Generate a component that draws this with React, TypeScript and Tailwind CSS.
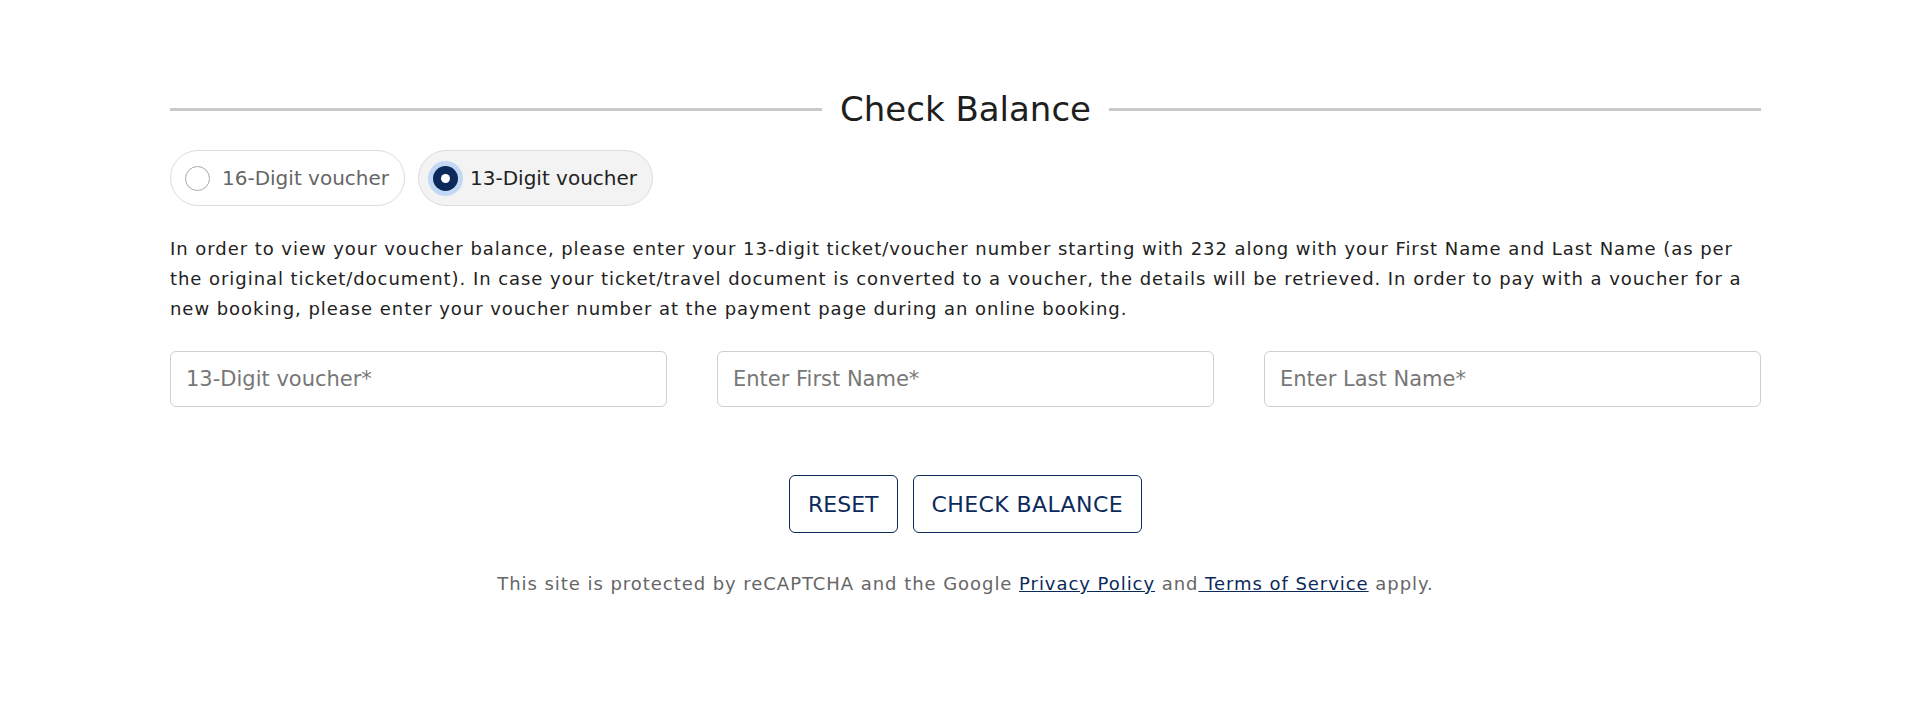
import React, { useState } from "react";

const FONT = "font-['DejaVu_Sans',sans-serif]";

function Radio({ label, checked, onClick }: { label: string; checked: boolean; onClick: () => void }) {
  return (
    <button
      type="button"
      onClick={onClick}
      className={`flex h-[56px] items-center rounded-full border border-[#dcdcdc] pl-[14px] pr-[15px] ${
        checked ? "bg-[#f3f3f3]" : "bg-white"
      }`}
    >
      {checked ? (
        <span className="flex h-[25px] w-[25px] items-center justify-center rounded-full bg-[#0b2a5b] shadow-[0_0_0_5px_#c3d8f5]">
          <span className="h-[9px] w-[9px] rounded-full bg-white" />
        </span>
      ) : (
        <span className="h-[25px] w-[25px] rounded-full border-[1.5px] border-[#a9a9a9] bg-white" />
      )}
      <span className={`ml-[12px] text-[20px] ${checked ? "text-[#222]" : "text-[#666]"}`}>{label}</span>
    </button>
  );
}

export default function App() {
  const [sel, setSel] = useState(13);
  return (
    <div className={`min-h-[720px] bg-white ${FONT}`}>
      <div className="ml-[170px] w-[1591px] pt-[88px]">
        <div className="flex items-center">
          <div className="h-[3px] flex-1 bg-[#c9c9c9]" />
          <h1 className="px-[18px] text-[34px] leading-[42px] text-[#1e1e1e]">Check Balance</h1>
          <div className="h-[3px] flex-1 bg-[#c9c9c9]" />
        </div>

        <div className="mt-[20px] flex gap-[13px]">
          <Radio label="16-Digit voucher" checked={sel === 16} onClick={() => setSel(16)} />
          <Radio label="13-Digit voucher" checked={sel === 13} onClick={() => setSel(13)} />
        </div>

        <p className="mt-[28px] text-[18px] leading-[30px] tracking-[0.95px] text-[#222]">
          In order to view your voucher balance, please enter your 13-digit ticket/voucher number starting with 232
          along with your First Name and Last Name (as per
          <br />
          the original ticket/document). In case your ticket/travel document is converted to a voucher, the details
          will be retrieved. In order to pay with a voucher for a
          <br />
          new booking, please enter your voucher number at the payment page during an online booking.
        </p>

        <div className="mt-[27px] grid grid-cols-3 gap-[50px]">
          {["13-Digit voucher*", "Enter First Name*", "Enter Last Name*"].map((p) => (
            <input
              key={p}
              placeholder={p}
              className="h-[56px] w-full rounded-[6px] border border-[#cfcfcf] bg-white px-[15px] text-[21px] text-[#222] outline-none placeholder:text-[#777]"
            />
          ))}
        </div>

        <div className="mt-[68px] flex justify-center gap-[15px]">
          <button className="h-[58px] rounded-[6px] border-[1.5px] border-[#0b2a5b] px-[18px] text-[22px] text-[#0b2a5b]">
            RESET
          </button>
          <button className="h-[58px] rounded-[6px] border-[1.5px] border-[#0b2a5b] px-[18px] text-[22px] tracking-[0.4px] text-[#0b2a5b]">
            CHECK BALANCE
          </button>
        </div>

        <p className="mt-[37px] text-center text-[18px] leading-[27px] tracking-[0.95px] text-[#666]">
          This site is protected by reCAPTCHA and the Google{" "}
          <a href="#" className="text-[#0b2a5b] underline">
            Privacy Policy
          </a>{" "}
          and
          <a href="#" className="text-[#0b2a5b] underline">
            {" "}
            Terms of Service
          </a>{" "}
          apply.
        </p>
      </div>
    </div>
  );
}
